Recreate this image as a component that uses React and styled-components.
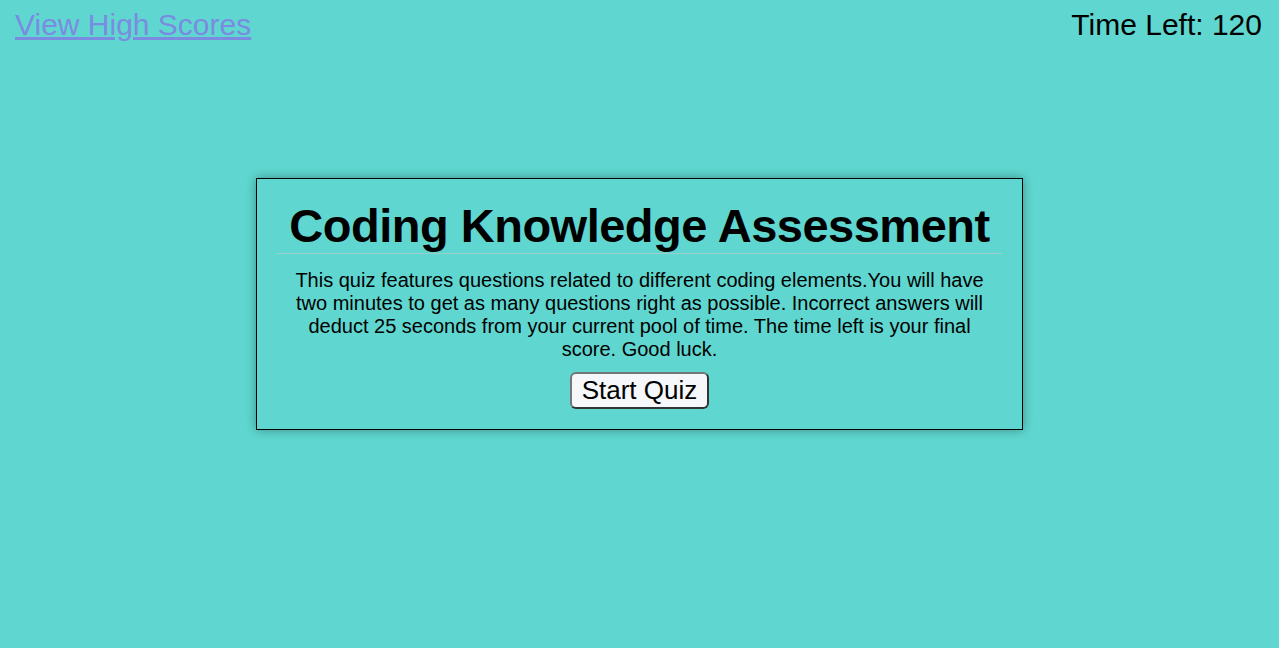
import React from "react";
import styled, { createGlobalStyle } from "styled-components";

const Global = createGlobalStyle`
  html, body { margin: 0; padding: 0; }
  body {
    background: #5fd7d0;
    font-family: "Liberation Sans", Arial, sans-serif;
    min-height: 648px;
  }
`;

const Header = styled.header`
  display: flex;
  justify-content: space-between;
  align-items: center;
  padding: 8px 17px 0 15px;
  font-size: 30px;
  line-height: 34px;
`;

const Link = styled.a`
  color: #7b8be0;
  text-decoration: underline;
  cursor: pointer;
`;

const Timer = styled.div`
  color: #000;
`;

const Card = styled.section`
  width: 60%;
  margin: 136px auto 0;
  border: 1px solid #000;
  box-shadow: 0 0 10px rgba(0, 0, 0, 0.35);
  padding: 20px 20px 20px;
  box-sizing: border-box;
  text-align: center;
`;

const Title = styled.h1`
  margin: 0;
  font-size: 47px;
  letter-spacing: -0.5px;
  font-weight: bold;
  line-height: 54px;
  border-bottom: 1px solid rgba(200, 200, 200, 0.6);
`;

const Text = styled.p`
  margin: 15px 0 11px;
  padding: 0 8px;
  font-size: 20px;
  line-height: 23px;
`;

const Button = styled.button`
  display: block;
  margin: 0 auto;
  font-family: "Liberation Sans", Arial, sans-serif;
  font-size: 26px;
  line-height: 30px;
  padding: 1px 10px 2px;
  background: #f5f7fa;
  border: 2px solid;
  border-color: #767676 #333 #333 #767676;
  border-radius: 6px;
  color: #000;
  cursor: pointer;
`;

export default function App() {
  return (
    <>
      <Global />
      <Header>
        <Link>View High Scores</Link>
        <Timer>Time Left: 120</Timer>
      </Header>
      <Card>
        <Title>Coding Knowledge Assessment</Title>
        <Text>
          This quiz features questions related to different coding elements.You will have
          two minutes to get as many questions right as possible. Incorrect answers will
          deduct 25 seconds from your current pool of time. The time left is your final
          score. Good luck.
        </Text>
        <Button>Start Quiz</Button>
      </Card>
    </>
  );
}
